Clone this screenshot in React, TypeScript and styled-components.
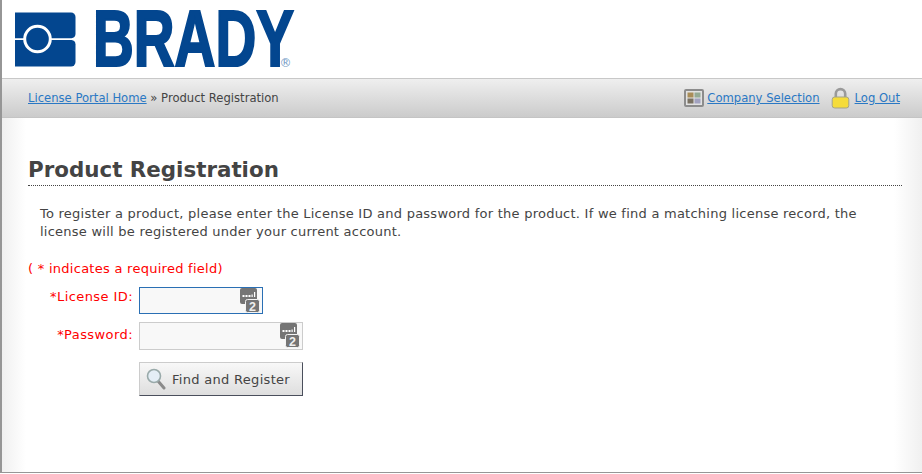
import React from "react";
import styled, { createGlobalStyle } from "styled-components";

const Global = createGlobalStyle`
  html, body { margin: 0; padding: 0; background: #fff; }
  body { font-family: "DejaVu Sans", Verdana, sans-serif; font-size: 12px; color: #444; }
`;
const Page = styled.div`
  width: 922px; height: 474px; box-sizing: border-box; overflow: hidden;
  display: flex; flex-direction: column;
`;
const Frame = styled.div`
  height: 473px; box-sizing: border-box; display: flex; flex-direction: column;
  border-left: 2px solid #969696; border-bottom: 1px solid #969696;
`;
const Header = styled.header`
  height: 78px; flex: none; padding-left: 12px; display: flex; align-items: flex-start; background: #fff;
`;
const Logo = styled.svg` overflow: visible; `;
const Nav = styled.nav`
  height: 40px; flex: none; box-sizing: border-box; display: flex; align-items: center; justify-content: space-between;
  padding: 0 22px 0 26px;
  border-top: 1px solid #c8c8c8; border-bottom: 1px solid #c4c4c4;
  background: linear-gradient(#efefef, #cbcbcb);
`;
const Crumbs = styled.div` font-size: 11.6px; color: #444; `;
const Link = styled.a`
  color: #2a78c4; text-decoration: underline; cursor: pointer; font-size: 11.6px;
`;
const NavActions = styled.div` display: flex; align-items: center; gap: 11px; `;
const NavAction = styled.div<{ $gap: number }>` display: flex; align-items: center; gap: ${p => p.$gap}px; `;
const Main = styled.main`
  flex: 1; padding: 38px 20px 0 26px;
  background: linear-gradient(90deg, #f0f0f0 0, #fff 24px, #fff calc(100% - 28px), #f0f0f0 100%);
`;
const Title = styled.h1`
  margin: 0; font-size: 21.4px; line-height: 28px; font-weight: 700; color: #444;
  padding-bottom: 1px; border-bottom: 1px dotted #444; font-family: "DejaVu Sans", Verdana, sans-serif;
`;
const Intro = styled.p`
  margin: 19px 0 0 12px; font-size: 13px; letter-spacing: 0.245px; line-height: 18px; color: #444;
`;
const Required = styled.div`
  margin-top: 19px; color: #f00; font-size: 13px; letter-spacing: 0.27px; line-height: 18px;
`;
const Form = styled.form`
  margin-top: 9px; display: grid; grid-template-columns: 105px auto; column-gap: 6px; justify-content: start; align-items: start; row-gap: 8px;
`;
const Label = styled.label<{ $top: number }>`
  color: #f00; text-align: right; font-size: 13px; letter-spacing: 0.42px; line-height: 20px; padding-top: ${p => p.$top}px;
`;
const FieldWrap = styled.div<{ $w: number; $h: number; $focus?: boolean }>`
  position: relative; box-sizing: border-box; width: ${p => p.$w}px; height: ${p => p.$h}px;
  background: #f8f8f8; border: 1px solid ${p => (p.$focus ? "#2a6fb4" : "#ccc")};
`;
const Input = styled.input`
  width: 100%; height: 100%; box-sizing: border-box; border: 0; outline: 0; background: transparent; padding: 0 4px;
`;
const KeyIcon = styled.svg`
  position: absolute; right: 2px; top: 0; width: 20px; height: 25px;
`;
const Submit = styled.button`
  grid-column: 2; width: 164px; height: 34px; box-sizing: border-box; margin-top: 4px;
  display: flex; align-items: center; gap: 6px; padding: 0 0 0 6px;
  border: 1px solid #ccc; border-right-color: #4a4f5c; border-bottom: 1px solid #4a4f5c;
  background: linear-gradient(#f8f8f8, #dedede);
  font-family: "DejaVu Sans", Verdana, sans-serif; font-size: 13px; letter-spacing: 0.3px; color: #444;
`;

const PasswordManagerIcon = () => (
  <KeyIcon viewBox="0 0 20 25">
    <path d="M2 0h13a2 2 0 0 1 2 2v12a2 2 0 0 1-2 2H7l-2 3v-3H2a2 2 0 0 1-2-2V2a2 2 0 0 1 2-2z" fill="#757575" />
    <rect x="2.5" y="7" width="2" height="2" fill="#fff" />
    <rect x="5.5" y="7" width="2" height="2" fill="#fff" />
    <rect x="8.5" y="7" width="2" height="2" fill="#fff" />
    <rect x="11.5" y="6.5" width="1.2" height="2.5" fill="#fff" />
    <rect x="14" y="4" width="1.2" height="5" fill="#fff" />
    <rect x="5.5" y="11.5" width="14" height="13" rx="2" fill="#757575" stroke="#f4f4f4" strokeWidth="1" />
    <text x="12.5" y="22.5" textAnchor="middle" fontFamily="'Liberation Sans', sans-serif" fontWeight="700" fontSize="12.5" fill="#eee">2</text>
  </KeyIcon>
);

export default function App() {
  return (
    <Page>
      <Global />
      <Frame>
        <Header>
          <Logo width="290" height="74" viewBox="0 0 290 74" aria-label="Brady">
            <path d="M1 12.5h56a4.5 4.5 0 0 1 4.5 4.5v17a4.5 4.5 0 0 1-4 4.2H1z" fill="#03468f" />
            <path d="M1 40h56.5a4.5 4.5 0 0 1 4 4.2v17.8a4.5 4.5 0 0 1-4.5 4.5H1z" fill="#03468f" />
            <circle cx="23.5" cy="39" r="12.8" fill="#03468f" stroke="#fff" strokeWidth="3" />
            <text
              transform="translate(79 65.8) scale(1 1.4)"
              fontFamily="'Liberation Sans', sans-serif"
              fontWeight="700"
              fontSize="56.5"
              fill="#03468f"
              stroke="#03468f"
              strokeWidth="1.6"
            >BRADY</text>
            <text x="265.5" y="66.5" fontFamily="'DejaVu Sans', sans-serif" fontSize="12" fill="#6f97c4">®</text>
          </Logo>
        </Header>
        <Nav>
          <Crumbs><Link>License Portal Home</Link> » Product Registration</Crumbs>
          <NavActions>
            <NavAction $gap={3}>
              <svg width="20" height="18" viewBox="0 0 20 18">
                <rect x="1" y="1" width="18" height="16" rx="1" fill="#e2e2e2" stroke="#8c8c8c" strokeWidth="2" />
                <rect x="3.5" y="3.5" width="6" height="5" fill="#a98d58" />
                <rect x="10.5" y="3.5" width="6" height="5" fill="#94aa94" />
                <rect x="3.5" y="9.5" width="6" height="5" fill="#7a7263" />
                <rect x="10.5" y="9.5" width="6" height="5" fill="#a2a2c0" />
              </svg>
              <Link>Company Selection</Link>
            </NavAction>
            <NavAction $gap={5}>
              <svg width="19" height="22" viewBox="0 0 19 22">
                <path d="M4.8 11V6.8a4.7 4.7 0 0 1 9.4 0V11" fill="none" stroke="#9a9a9a" strokeWidth="2.6" />
                <rect x="1.2" y="10" width="16.6" height="11" rx="2.5" fill="#f5dc3a" stroke="#a3a38a" />
              </svg>
              <Link>Log Out</Link>
            </NavAction>
          </NavActions>
        </Nav>
        <Main>
          <Title>Product Registration</Title>
          <Intro>To register a product, please enter the License ID and password for the product. If we find a matching license record, the license will be registered under your current account.</Intro>
          <Required>( * indicates a required field)</Required>
          <Form>
            <Label $top={0}>*License ID:</Label>
            <FieldWrap $w={124} $h={27} $focus><Input /><PasswordManagerIcon /></FieldWrap>
            <Label $top={3}>*Password:</Label>
            <FieldWrap $w={164} $h={28}><Input /><PasswordManagerIcon /></FieldWrap>
            <Submit type="button">
              <svg width="20" height="22" viewBox="0 0 20 22">
                <line x1="12" y1="13" x2="18" y2="20" stroke="#8a8a8a" strokeWidth="3" strokeLinecap="round" />
                <circle cx="8" cy="8" r="6.5" fill="#e4eef6" stroke="#9aa" strokeWidth="1.6" />
              </svg>
              Find and Register
            </Submit>
          </Form>
        </Main>
      </Frame>
    </Page>
  );
}
